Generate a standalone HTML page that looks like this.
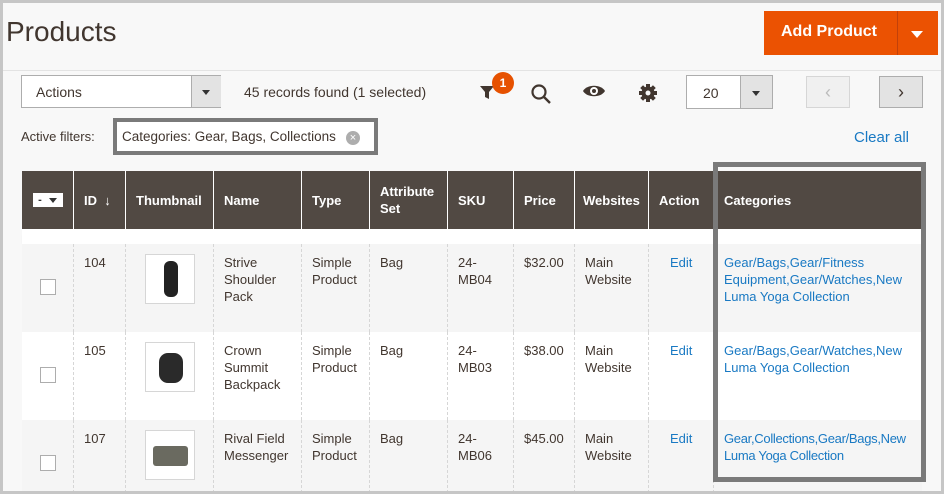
<!DOCTYPE html>
<html><head><meta charset="utf-8"><style>
*{box-sizing:border-box;margin:0;padding:0}
body{width:944px;height:494px;overflow:hidden;background:#c6c6c6;font-family:"Liberation Sans",sans-serif;color:#303030;position:relative}
.pg{position:absolute;left:3px;top:3px;width:938px;height:488px;background:#f8f8f8;overflow:hidden}
.a{position:absolute}
.t{font-size:13px;color:#41362f}
.lk{color:#1979c3}
.th{position:absolute;top:168px;height:58px;background:#514943;color:#fff;font-weight:bold;font-size:13px;padding:0 10px;display:flex;align-items:center;border-right:1px solid #fff}
.row{position:absolute;left:19px;width:900px;height:88px}
.cell{position:absolute;top:0;height:100%;border-right:1px dashed #d6d6d6;font-size:13px;color:#41362f;line-height:17px;padding:10px 10px}
.thumb{position:absolute;width:50px;height:50px;border:1px solid #d6d6d6;background:#fff;left:142px;top:10px}
.cb{position:absolute;width:16px;height:16px;border:1px solid #adadad;background:#fff;left:37px;top:35px}
</style></head><body>
<div class="pg">
<div class="a" style="left:3px;top:13px;font-size:28px;color:#41362f">Products</div>
<div class="a" style="left:761px;top:8px;width:174px;height:44px;background:#eb5202;color:#fff;font-weight:bold;font-size:16px;">
<span class="a" style="left:17px;top:12px">Add Product</span>
<div class="a" style="left:133px;top:0;width:1px;height:44px;background:#c2410a"></div>
<div class="a" style="left:147px;top:20px;width:0;height:0;border-left:6px solid transparent;border-right:6px solid transparent;border-top:7px solid #fff"></div>
</div>
<div class="a" style="left:0;top:67px;width:938px;height:1px;background:#e3e3e3"></div>
<div class="a" style="left:18px;top:72px;width:200px;height:33px;border:1px solid #adadad;background:#fff">
<span class="a t" style="left:14px;top:8px;font-size:14px">Actions</span>
<div class="a" style="left:169px;top:0;width:30px;height:31px;background:#e3e3e3;border-left:1px solid #adadad"></div>
<div class="a" style="left:180px;top:14px;border-left:4px solid transparent;border-right:4px solid transparent;border-top:5px solid #333"></div>
</div>
<span class="a t" style="left:241px;top:81px;font-size:14px">45 records found (1 selected)</span>
<svg class="a" style="left:476px;top:80px" width="16" height="18" viewBox="0 0 16 18"><path d="M1 3h14l-5 6v7l-4-2V9z" fill="#41362f"/></svg>
<div class="a" style="left:489px;top:69px;width:22px;height:22px;border-radius:50%;background:#e65100;color:#fff;font-weight:bold;font-size:12px;text-align:center;line-height:22px">1</div>
<svg class="a" style="left:527px;top:80px" width="22" height="22" viewBox="0 0 22 22"><circle cx="9" cy="9" r="6.5" fill="none" stroke="#41362f" stroke-width="2.2"/><path d="M14 14l6 6" stroke="#41362f" stroke-width="2.4"/></svg>
<svg class="a" style="left:579px;top:80px" width="24" height="16" viewBox="0 0 24 16"><path d="M1 8C5 1 19 1 23 8C19 15 5 15 1 8Z" fill="#41362f"/><circle cx="12" cy="8" r="4" fill="#fff"/><circle cx="12" cy="8" r="2" fill="#41362f"/></svg>
<svg class="a" style="left:635px;top:80px" width="20" height="20" viewBox="0 0 20 20"><g fill="#41362f"><circle cx="10" cy="10" r="6.5"/><rect x="8" y="1" width="4" height="18"/><rect x="1" y="8" width="18" height="4"/><rect x="8" y="1" width="4" height="18" transform="rotate(45 10 10)"/><rect x="8" y="1" width="4" height="18" transform="rotate(-45 10 10)"/></g><circle cx="10" cy="10" r="2.5" fill="#f8f8f8"/></svg>
<div class="a" style="left:683px;top:72px;width:87px;height:34px;border:1px solid #adadad;background:#fff">
<span class="a t" style="left:16px;top:9px;font-size:14px">20</span>
<div class="a" style="left:53px;top:0;width:32px;height:32px;background:#e3e3e3;border-left:1px solid #adadad"></div>
<div class="a" style="left:65px;top:15px;border-left:4px solid transparent;border-right:4px solid transparent;border-top:5px solid #333"></div>
</div>
<div class="a" style="left:803px;top:73px;width:44px;height:32px;border:1px solid #d6d6d6;background:#f0f0f0;color:#bbb;text-align:center;font-size:18px;line-height:30px">&#8249;</div>
<div class="a" style="left:876px;top:73px;width:44px;height:32px;border:1px solid #adadad;background:#e3e3e3;color:#41362f;text-align:center;font-size:18px;line-height:30px">&#8250;</div>
<span class="a t" style="left:18px;top:126px;font-size:13px">Active filters:</span>
<div class="a" style="left:110px;top:115px;width:265px;height:37px;border:4px solid #7a7a7a;background:#fff">
<span class="a t" style="left:5px;top:7px;font-size:13.5px">Categories: Gear, Bags, Collections</span>
<div class="a" style="left:229px;top:9px;width:14px;height:14px;border-radius:50%;background:#adadad;color:#fff;font-size:11px;text-align:center;line-height:14px">×</div>
</div>
<span class="a lk" style="left:851px;top:126px;font-size:15px">Clear all</span>

<div class="th" style="left:19px;width:52px;justify-content:center"><span style="background:#fff;color:#333;width:30px;height:14px;font-size:11px;display:flex;align-items:center;justify-content:space-around;padding:0 2px">- <span style="border-left:4px solid transparent;border-right:4px solid transparent;border-top:5px solid #333"></span></span></div>
<div class="th" style="left:71px;width:52px">ID&nbsp;&nbsp;<span style="font-weight:normal">↓</span></div>
<div class="th" style="left:123px;width:88px">Thumbnail</div>
<div class="th" style="left:211px;width:88px">Name</div>
<div class="th" style="left:299px;width:68px">Type</div>
<div class="th" style="left:367px;width:78px;line-height:17px">Attribute<br>Set</div>
<div class="th" style="left:445px;width:66px">SKU</div>
<div class="th" style="left:511px;width:61px">Price</div>
<div class="th" style="left:572px;width:74px;padding-left:8px">Websites</div>
<div class="th" style="left:646px;width:65px">Action</div>
<div class="th" style="left:711px;width:208px;border-right:none">Categories</div>
<div class="a" style="left:19px;top:226px;width:900px;height:15px;background:#fff;box-shadow:0 3px 3px -2px rgba(0,0,0,.12)"></div>

<div class="row" style="top:241px;background:#f5f5f5">
<div class="cell" style="left:0;width:52px"><div class="cb" style="left:18px"></div></div>
<div class="cell" style="left:52px;width:52px">104</div>
<div class="cell" style="left:104px;width:88px"></div>
<div class="cell" style="left:192px;width:88px">Strive<br>Shoulder<br>Pack</div>
<div class="cell" style="left:280px;width:68px">Simple<br>Product</div>
<div class="cell" style="left:348px;width:78px">Bag</div>
<div class="cell" style="left:426px;width:66px">24-<br>MB04</div>
<div class="cell" style="left:492px;width:61px;padding-left:10px">$32.00</div>
<div class="cell" style="left:553px;width:74px">Main<br>Website</div>
<div class="cell lk" style="left:627px;width:65px;padding-left:21px;color:#1979c3">Edit</div>
<div class="cell lk" style="left:692px;width:208px;border:none;color:#1979c3;padding-left:10px">Gear/Bags,Gear/Fitness Equipment,Gear/Watches,New Luma Yoga Collection</div>
</div>
<div class="row" style="top:329px;background:#fff">
<div class="cell" style="left:0;width:52px"><div class="cb" style="left:18px"></div></div>
<div class="cell" style="left:52px;width:52px">105</div>
<div class="cell" style="left:104px;width:88px"></div>
<div class="cell" style="left:192px;width:88px">Crown<br>Summit<br>Backpack</div>
<div class="cell" style="left:280px;width:68px">Simple<br>Product</div>
<div class="cell" style="left:348px;width:78px">Bag</div>
<div class="cell" style="left:426px;width:66px">24-<br>MB03</div>
<div class="cell" style="left:492px;width:61px">$38.00</div>
<div class="cell" style="left:553px;width:74px">Main<br>Website</div>
<div class="cell" style="left:627px;width:65px;padding-left:21px;color:#1979c3">Edit</div>
<div class="cell" style="left:692px;width:208px;border:none;color:#1979c3;padding-left:10px">Gear/Bags,Gear/Watches,New Luma Yoga Collection</div>
</div>
<div class="row" style="top:417px;background:#f5f5f5">
<div class="cell" style="left:0;width:52px"><div class="cb" style="left:18px"></div></div>
<div class="cell" style="left:52px;width:52px">107</div>
<div class="cell" style="left:104px;width:88px"></div>
<div class="cell" style="left:192px;width:88px">Rival Field<br>Messenger</div>
<div class="cell" style="left:280px;width:68px">Simple<br>Product</div>
<div class="cell" style="left:348px;width:78px">Bag</div>
<div class="cell" style="left:426px;width:66px">24-<br>MB06</div>
<div class="cell" style="left:492px;width:61px">$45.00</div>
<div class="cell" style="left:553px;width:74px">Main<br>Website</div>
<div class="cell" style="left:627px;width:65px;padding-left:21px;color:#1979c3">Edit</div>
<div class="cell" style="left:692px;width:208px;border:none;color:#1979c3;padding-left:10px;letter-spacing:-0.3px">Gear,Collections,Gear/Bags,New Luma Yoga Collection</div>
</div>
<div class="thumb" style="top:251px"><div class="a" style="left:18px;top:6px;width:14px;height:36px;background:#222;border-radius:6px"></div></div>
<div class="thumb" style="top:339px"><div class="a" style="left:13px;top:10px;width:24px;height:30px;background:#2a2a2a;border-radius:9px"></div></div>
<div class="thumb" style="top:427px"><div class="a" style="left:7px;top:15px;width:35px;height:20px;background:#6a6a60;border-radius:3px"></div></div>

<div class="a" style="left:710px;top:159px;width:213px;height:320px;border:5px solid #7a7a7a"></div>
</div>
</body></html>
